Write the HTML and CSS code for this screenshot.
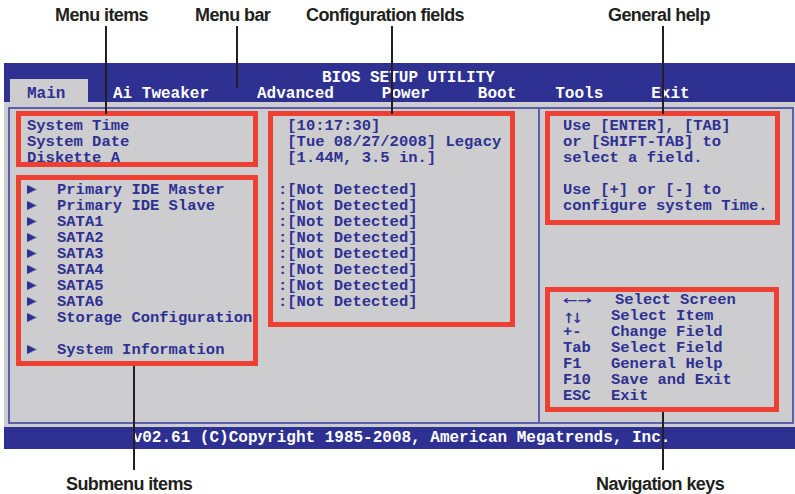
FILE: index.html
```html
<!DOCTYPE html>
<html>
<head>
  <meta charset="UTF-8">
  <title>BIOS Setup Utility - Main</title>
  <link rel="stylesheet" href="styles.css">
</head>
<body>
  <div class="page">
    <div class="callout-space"></div>

    <div class="bios">
      <div class="bios-header">
        <div class="bios-title">BIOS SETUP UTILITY</div>
        <div class="menu">
          <span class="menu-tab">Main</span>
          <span class="menu-item first">Ai Tweaker</span>
          <span class="menu-item">Advanced</span>
          <span class="menu-item">Power</span>
          <span class="menu-item">Boot</span>
          <span class="menu-item tools">Tools</span>
          <span class="menu-item">Exit</span>
        </div>
      </div>

      <div class="bios-body">
        <div class="frame">
          <div class="left-pane">
            <div class="item-col">
              <div class="mark items">
                <div class="line">System Time</div>
                <div class="line">System Date</div>
                <div class="line">Diskette A</div>
              </div>
              <div class="mark submenu">
                <div class="line"><span class="arrow"><svg width="11" height="9" viewBox="0 0 11 9"><polygon points="1.5,0 11,4.5 1.5,9" fill="#a3a5c8"/><polygon points="0,0 9,4.5 0,9" fill="#2e3192"/></svg></span>Primary IDE Master</div>
                <div class="line"><span class="arrow"><svg width="11" height="9" viewBox="0 0 11 9"><polygon points="1.5,0 11,4.5 1.5,9" fill="#a3a5c8"/><polygon points="0,0 9,4.5 0,9" fill="#2e3192"/></svg></span>Primary IDE Slave</div>
                <div class="line"><span class="arrow"><svg width="11" height="9" viewBox="0 0 11 9"><polygon points="1.5,0 11,4.5 1.5,9" fill="#a3a5c8"/><polygon points="0,0 9,4.5 0,9" fill="#2e3192"/></svg></span>SATA1</div>
                <div class="line"><span class="arrow"><svg width="11" height="9" viewBox="0 0 11 9"><polygon points="1.5,0 11,4.5 1.5,9" fill="#a3a5c8"/><polygon points="0,0 9,4.5 0,9" fill="#2e3192"/></svg></span>SATA2</div>
                <div class="line"><span class="arrow"><svg width="11" height="9" viewBox="0 0 11 9"><polygon points="1.5,0 11,4.5 1.5,9" fill="#a3a5c8"/><polygon points="0,0 9,4.5 0,9" fill="#2e3192"/></svg></span>SATA3</div>
                <div class="line"><span class="arrow"><svg width="11" height="9" viewBox="0 0 11 9"><polygon points="1.5,0 11,4.5 1.5,9" fill="#a3a5c8"/><polygon points="0,0 9,4.5 0,9" fill="#2e3192"/></svg></span>SATA4</div>
                <div class="line"><span class="arrow"><svg width="11" height="9" viewBox="0 0 11 9"><polygon points="1.5,0 11,4.5 1.5,9" fill="#a3a5c8"/><polygon points="0,0 9,4.5 0,9" fill="#2e3192"/></svg></span>SATA5</div>
                <div class="line"><span class="arrow"><svg width="11" height="9" viewBox="0 0 11 9"><polygon points="1.5,0 11,4.5 1.5,9" fill="#a3a5c8"/><polygon points="0,0 9,4.5 0,9" fill="#2e3192"/></svg></span>SATA6</div>
                <div class="line"><span class="arrow"><svg width="11" height="9" viewBox="0 0 11 9"><polygon points="1.5,0 11,4.5 1.5,9" fill="#a3a5c8"/><polygon points="0,0 9,4.5 0,9" fill="#2e3192"/></svg></span>Storage Configuration</div>
                <div class="line"></div>
                <div class="line"><span class="arrow"><svg width="11" height="9" viewBox="0 0 11 9"><polygon points="1.5,0 11,4.5 1.5,9" fill="#a3a5c8"/><polygon points="0,0 9,4.5 0,9" fill="#2e3192"/></svg></span>System Information</div>
              </div>
            </div>

            <div class="field-col">
              <div class="mark fields">
                <div class="line"> [10:17:30]</div>
                <div class="line"> [Tue 08/27/2008] Legacy</div>
                <div class="line"> [1.44M, 3.5 in.]</div>
                <div class="line"></div>
                <div class="line">:[Not Detected]</div>
                <div class="line">:[Not Detected]</div>
                <div class="line">:[Not Detected]</div>
                <div class="line">:[Not Detected]</div>
                <div class="line">:[Not Detected]</div>
                <div class="line">:[Not Detected]</div>
                <div class="line">:[Not Detected]</div>
                <div class="line">:[Not Detected]</div>
              </div>
            </div>
          </div>

          <div class="right-pane">
            <div class="mark help">
              <div class="line">Use [ENTER], [TAB]</div>
              <div class="line">or [SHIFT-TAB] to</div>
              <div class="line">select a field.</div>
              <div class="line"></div>
              <div class="line">Use [+] or [-] to</div>
              <div class="line">configure system Time.</div>
            </div>
            <div class="mark navkeys">
              <div class="nav-row"><span class="key wide"><span class="glyphs stretch">←→</span></span>Select Screen</div>
              <div class="nav-row"><span class="key"><span class="glyphs tall">↑↓</span></span>Select Item</div>
              <div class="nav-row"><span class="key">+-</span>Change Field</div>
              <div class="nav-row"><span class="key">Tab</span>Select Field</div>
              <div class="nav-row"><span class="key">F1</span>General Help</div>
              <div class="nav-row"><span class="key">F10</span>Save and Exit</div>
              <div class="nav-row"><span class="key">ESC</span>Exit</div>
            </div>
          </div>
        </div>
      </div>

      <div class="bios-footer">v02.61 (C)Copyright 1985-2008, American Megatrends, Inc.</div>
    </div>

    <!-- callouts -->
    <div class="callout" style="left:55px;top:6px">Menu items</div>
    <div class="callout" style="left:195px;top:6px">Menu bar</div>
    <div class="callout" style="left:306px;top:6px">Configuration fields</div>
    <div class="callout" style="left:608px;top:6px">General help</div>
    <div class="callout" style="left:66px;top:475px">Submenu items</div>
    <div class="callout" style="left:596px;top:475px">Navigation keys</div>

    <div class="leader" style="left:105px;top:26px;height:88px"></div>
    <div class="leader" style="left:236px;top:26px;height:62px"></div>
    <div class="leader" style="left:391px;top:26px;height:88px"></div>
    <div class="leader" style="left:662px;top:26px;height:88px"></div>
    <div class="leader" style="left:133px;top:366px;height:104px"></div>
    <div class="leader" style="left:662px;top:412px;height:58px"></div>
  </div>
</body>
</html>
```

FILE: styles.css
```css
body { margin: 0; background: #fff; }
.page { position: relative; width: 795px; height: 494px; overflow: hidden; }
.callout-space { height: 63px; }

/* bios screen */
.bios {
  margin-left: 4px;
  width: 791px;
  font-family: "Liberation Mono", "Courier New", monospace;
  font-weight: bold;
  font-size: 16px;
  line-height: 16px;
  color: #2e3192;
}
.bios-header {
  background: #2e3192;
  color: #fff;
  height: 39px;
  box-sizing: border-box;
  padding: 7px 0 0 6px;
}
.bios-title { padding-left: 312px; white-space: pre; }
.menu { display: flex; align-items: flex-end; white-space: pre; }
.menu-tab {
  background: #cdcdcf;
  color: #2e3192;
  width: 78px;
  box-sizing: border-box;
  padding: 7px 0 0 17px;
  margin-top: -7px;
}
.menu-item { margin-left: 48px; }
.menu-item.first { margin-left: 25px; }
.menu-item.tools { margin-left: 39px; }

.bios-body {
  background: #cdcdcf;
  height: 325px;
  box-sizing: border-box;
  padding: 5px 1px 3px 4px;
}
.frame {
  display: flex;
  height: 317px;
  box-sizing: border-box;
  border: 2px solid #5c5fa9;
  font-size: 15.5px;
}
.left-pane {
  display: flex;
  width: 528px;
  padding-top: 2px;
  border-right: 2px solid #5c5fa9;
}
.item-col { margin-left: 6px; width: 242px; }
.field-col { margin-left: 10px; width: 247px; }
.right-pane { padding: 2px 0 0 5px; }

.mark { border: 5px solid #ed4032; box-sizing: border-box; }
.items { width: 242px; height: 56px; padding: 2px 0 0 6px; }
.submenu { width: 242px; height: 191px; margin-top: 8px; padding: 2px 0 0 6px; }
.fields { width: 247px; height: 216px; padding: 2px 0 0 5px; }
.help { width: 235px; height: 114px; padding: 2px 0 0 13px; }
.navkeys { width: 234px; height: 125px; margin-top: 62px; padding: 0 0 0 13px; }

.line { height: 16px; white-space: pre; }
.arrow { display: inline-block; width: 30px; }
.arrow svg { vertical-align: baseline; }

.nav-row { display: flex; height: 16px; white-space: pre; }
.key { width: 48px; flex: none; }
.key.wide { width: 52px; }
.glyphs {
  display: inline-block;
  font-family: "DejaVu Sans Mono", monospace;
  font-weight: normal;
  font-size: 16px;
}
.glyphs.stretch { transform: scaleX(1.5); transform-origin: left center; }
.glyphs.tall { font-size: 19px; letter-spacing: -3px; }

.bios-footer {
  background: #2e3192;
  color: #fff;
  height: 22px;
  box-sizing: border-box;
  padding: 3px 0 0 4px;
  text-align: center;
  white-space: pre;
}

/* annotations */
.callout {
  position: absolute;
  font-family: "Liberation Sans", Arial, sans-serif;
  font-weight: bold;
  font-size: 18px;
  line-height: 18px;
  letter-spacing: -0.6px;
  color: #231f20;
  white-space: nowrap;
}
.leader { position: absolute; width: 1.5px; background: #231f20; }
```
